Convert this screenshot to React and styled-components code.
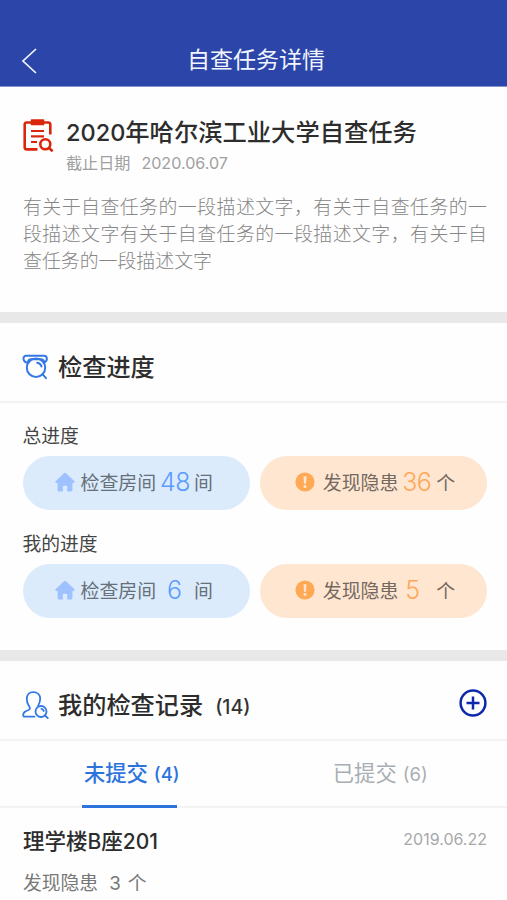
import React, { useState } from "react";
import styled, { createGlobalStyle } from "styled-components";

const GlobalStyle = createGlobalStyle`
  * {
    box-sizing: border-box;
  }
  body {
    margin: 0;
    background: #fefefe;
    font-family: "Liberation Sans", "Noto Sans CJK SC", sans-serif;
    overflow: hidden;
  }
  svg {
    display: block;
  }
`;

const Page = styled.div`
  width: 507px;
  height: 900px;
  overflow: hidden;
  display: flex;
  flex-direction: column;
`;

const Header = styled.header`
  height: 87px;
  flex-shrink: 0;
  padding: 33px 21px 0;
  display: grid;
  grid-template-columns: 40px 1fr 40px;
  background: #2b46a8;
  border-bottom: 1px solid #8292cd;
`;

const BackButton = styled.div`
  display: flex;
  align-items: center;
  height: 55px;
`;

const HeaderTitle = styled.div`
  color: #f2f5ff;
  font-size: 23px;
  line-height: 54px;
  text-align: center;
  padding-left: 5px;
  white-space: nowrap;
`;

const Section = styled.section`
  height: ${(props) => props.$height}px;
  flex-shrink: 0;
  border-bottom: ${(props) => (props.$last ? "none" : "11px solid #e8e8e8")};
`;

const TaskBox = styled.div`
  padding: 31px 20px 0 23px;
`;

const TaskTop = styled.div`
  display: flex;
  gap: 13px;
`;

const TaskIcon = styled.div`
  width: 30px;
  height: 34px;
  margin-top: 1px;
`;

const TaskName = styled.div`
  color: #2d2d2d;
  font-size: 24.3px;
  font-weight: 500;
  line-height: 29px;
  white-space: nowrap;
`;

const Num = styled.span`
  font-family: "Inter", sans-serif;
  font-size: ${(props) => props.$size || "inherit"};
`;

const Deadline = styled.div`
  display: flex;
  gap: 11px;
  margin-top: 5px;
  color: #a0a0a0;
  font-size: 16.1px;
  line-height: 22px;
`;

const Description = styled.p`
  margin: 20px 0 0;
  color: #868686;
  font-size: 18.9px;
  font-weight: 300;
  line-height: 27px;
  text-align: justify;
`;

const SectionTitle = styled.div`
  height: ${(props) => props.$height}px;
  padding: 0 20px 0 22px;
  display: flex;
  align-items: center;
  border-bottom: 2px solid #f3f3f3;
`;

const TitleIcon = styled.div`
  width: 27px;
  height: 28px;
  margin-right: 9px;
  margin-top: ${(props) => props.$top}px;
`;

const TitleText = styled.div`
  color: #2d2d2d;
  font-size: 24.2px;
  font-weight: 500;
  line-height: 36px;
  padding-top: 12px;
  white-space: nowrap;
`;

const Count = styled.div`
  margin-left: 12px;
  padding-top: 13px;
  color: #333;
  font-family: "Inter", sans-serif;
  font-size: 19.6px;
  font-weight: 500;
`;

const AddButton = styled.div`
  width: 28px;
  height: 28px;
  margin-left: auto;
  margin-top: 6px;
`;

const Progress = styled.div`
  padding: 16px 20px 0 22.5px;
`;

const ProgressLabel = styled.div`
  height: 37px;
  color: #444;
  font-size: 18.8px;
  line-height: 36px;
`;

const PillRow = styled.div`
  display: grid;
  grid-template-columns: 1fr 1fr;
  gap: 10px;
  margin-bottom: 17px;
`;

const Pill = styled.div`
  height: 54px;
  border-radius: 27px;
  padding-left: ${(props) => (props.$warn ? 35 : 32)}px;
  display: flex;
  align-items: center;
  background: ${(props) => (props.$warn ? "#fee6d1" : "#dbebfc")};
  color: ${(props) => (props.$warn ? "#75695f" : "#667079")};
  font-size: 18.9px;
  line-height: 54px;
`;

const PillIcon = styled.div`
  width: 20px;
  height: 20px;
  margin-top: -2px;
  margin-right: ${(props) => (props.$warn ? 8 : 6)}px;
`;

const PillText = styled.span`
  padding-top: 2px;
`;

const PillValue = styled.span`
  width: 38px;
  padding-left: ${(props) => props.$left}px;
  padding-bottom: 2px;
  color: ${(props) => (props.$warn ? "#ffa758" : "#5b9bff")};
  font-family: "Inter", sans-serif;
  font-size: 25px;
  font-weight: 300;
  letter-spacing: -0.6px;
`;

const Tabs = styled.div`
  height: 67px;
  display: grid;
  grid-template-columns: 1fr 1fr;
  grid-template-rows: 65px;
  border-bottom: 2px solid #f3f3f3;
`;

const Tab = styled.div`
  position: relative;
  display: flex;
  justify-content: center;
  gap: 6px;
  padding-left: ${(props) => props.$shift}px;
  color: ${(props) => (props.$active ? "#2c73dc" : "#a8aeb3")};
  font-size: 21.3px;
  font-weight: ${(props) => (props.$active ? 500 : 400)};
  line-height: 67px;
  cursor: pointer;
`;

const TabLine = styled.div`
  position: absolute;
  left: 82px;
  bottom: -2px;
  width: 95px;
  height: 3px;
  background: #2c73dc;
`;

const Record = styled.div`
  padding: 18px 20px 0 23px;
`;

const RecordTop = styled.div`
  display: flex;
  justify-content: space-between;
  line-height: 32px;
`;

const RecordName = styled.div`
  color: #2d2d2d;
  font-size: 21.5px;
  font-weight: 500;
`;

const RecordDate = styled.div`
  color: #a8a8a8;
  font-family: "Inter", sans-serif;
  font-size: 16px;
  line-height: 27px;
`;

const RecordInfo = styled.div`
  display: flex;
  margin-top: 11px;
  color: #777;
  font-size: 18.8px;
  line-height: 30px;
`;

const DangerCount = styled(Num)`
  margin: 0 7px 0 11px;
`;

const TaskSvg = () => (
  <svg width="31" height="34" viewBox="0 0 31 34" fill="none" stroke="#d9270c" strokeWidth="2.6">
    <path d="M27.3 15.5V5.6Q27.3 3.5 25.2 3.5H3.8Q1.7 3.5 1.7 5.6V28.3Q1.7 30.4 3.8 30.4H14.5" />
    <path d="M8.5 1H20.5V5.5H8.5Z" fill="#d9270c" strokeWidth="1.5" strokeLinejoin="round" />
    <path d="M8 12H21M8 17.3H21M8 23H14" strokeWidth="2.2" />
    <circle cx="22.3" cy="25.2" r="5" />
    <path d="M26 29L29.7 32.3" />
  </svg>
);

const ProgressSvg = () => (
  <svg width="27" height="28" viewBox="0 0 27 28" fill="none" stroke="#3478e5" strokeWidth="2" strokeLinecap="round">
    <circle cx="14" cy="14.7" r="9.2" />
    <path d="M6 9.3C3 10 1.2 7.2 1.5 5Q2 2.8 4.3 2.8H22.1Q24.8 2.9 24.8 5.6C25 7.5 23.8 8.7 22.3 9.3" />
    <path d="M6.2 8.8Q6.2 6.5 9 6.2H19Q21.5 6.4 22.2 8.8M15.2 9.8Q18.7 10.4 19.5 13.6M20.7 21.4L24 25.2" />
  </svg>
);

const PersonSvg = () => (
  <svg width="27" height="28" viewBox="0 0 27 28" fill="none" stroke="#3478e5" strokeWidth="1.8" strokeLinecap="round" strokeLinejoin="round">
    <path d="M12.5 25.7H2.8Q1 25.7 1.2 23.7C1.4 20.8 3.2 20.3 6.6 19C8.8 18 8 16.5 6.7 14.6C5.5 12.8 4.8 10.7 4.8 8C4.8 3.7 7.4 1.2 11.3 1.2C15.4 1.2 18.2 3.7 18.2 8C18.2 10.7 17.3 12.5 16.1 14.8" />
    <circle cx="19" cy="20.5" r="5.5" />
    <path d="M23 24.5L25.8 27.2M19.5 17.8Q21.4 18.2 21.7 20" />
  </svg>
);

const HomeSvg = () => (
  <svg width="20" height="20" viewBox="0 0 20 20" fill="#9fc1ff">
    <path d="M9 1.2Q10 .3 11 1.2L19.2 8.9Q20.3 10.5 18.5 11H17.4V18Q17.4 19.5 15.8 19.5H12.2V14.5Q12.2 13.8 11.4 13.8H8.6Q7.8 13.8 7.8 14.5V19.5H4.2Q2.6 19.5 2.6 18V11H1.5Q-.3 10.5.8 8.9Z" />
  </svg>
);

const WarnSvg = () => (
  <svg width="20" height="20" viewBox="0 0 20 20">
    <circle cx="10" cy="10" r="9.6" fill="#ffa955" />
    <path d="M8.5 4.2H11.5L11 11.8H9Z" fill="#fee6d1" />
    <circle cx="10" cy="14.6" r="1.5" fill="#fee6d1" />
  </svg>
);

const progressList = [
  { label: "总进度", rooms: 48, dangers: 36, roomLeft: 4, dangerLeft: 4 },
  { label: "我的进度", rooms: 6, dangers: 5, roomLeft: 11, dangerLeft: 7 },
];

export default function App() {
  const [activeTab, setActiveTab] = useState(0);

  return (
    <>
      <GlobalStyle />
      <Page lang="zh-CN">
        <Header>
          <BackButton>
            <svg width="18" height="26" viewBox="0 0 18 26" fill="none" stroke="#f2f5ff" strokeWidth="1.7">
              <path d="M15 1L2 13L15 25" />
            </svg>
          </BackButton>
          <HeaderTitle>自查任务详情</HeaderTitle>
        </Header>

        <Section $height={236}>
          <TaskBox>
            <TaskTop>
              <TaskIcon>
                <TaskSvg />
              </TaskIcon>
              <div>
                <TaskName>
                  <Num $size="23.5px">2020</Num>年哈尔滨工业大学自查任务
                </TaskName>
                <Deadline>
                  <span>截止日期</span>
                  <Num>2020.06.07</Num>
                </Deadline>
              </div>
            </TaskTop>
            <Description>
              有关于自查任务的一段描述文字，有关于自查任务的一段描述文字有关于自查任务的一段描述文字，有关于自查任务的一段描述文字
            </Description>
          </TaskBox>
        </Section>

        <Section $height={338}>
          <SectionTitle $height={80}>
            <TitleIcon $top={9}>
              <ProgressSvg />
            </TitleIcon>
            <TitleText>检查进度</TitleText>
          </SectionTitle>
          <Progress>
            {progressList.map((item) => (
              <div key={item.label}>
                <ProgressLabel>{item.label}</ProgressLabel>
                <PillRow>
                  <Pill>
                    <PillIcon>
                      <HomeSvg />
                    </PillIcon>
                    <PillText>检查房间</PillText>
                    <PillValue $left={item.roomLeft}>{item.rooms}</PillValue>
                    <PillText>间</PillText>
                  </Pill>
                  <Pill $warn>
                    <PillIcon $warn>
                      <WarnSvg />
                    </PillIcon>
                    <PillText>发现隐患</PillText>
                    <PillValue $warn $left={item.dangerLeft}>{item.dangers}</PillValue>
                    <PillText>个</PillText>
                  </Pill>
                </PillRow>
              </div>
            ))}
          </Progress>
        </Section>

        <Section $height={239} $last>
          <SectionTitle $height={80}>
            <TitleIcon $top={10}>
              <PersonSvg />
            </TitleIcon>
            <TitleText>我的检查记录</TitleText>
            <Count>(14)</Count>
            <AddButton>
              <svg width="28" height="28" viewBox="0 0 28 28" fill="none" stroke="#0c28ac" strokeWidth="2.5">
                <circle cx="14" cy="14" r="12.4" />
                <path d="M7.5 14H20.5M14 7.5V20.5" />
              </svg>
            </AddButton>
          </SectionTitle>
          <Tabs>
            <Tab $active={activeTab === 0} $shift={10} onClick={() => setActiveTab(0)}>
              未提交 <Num $size="18.5px">(4)</Num>
              {activeTab === 0 && <TabLine />}
            </Tab>
            <Tab $active={activeTab === 1} $shift={0} onClick={() => setActiveTab(1)}>
              已提交 <Num $size="18.5px">(6)</Num>
              {activeTab === 1 && <TabLine />}
            </Tab>
          </Tabs>
          <Record>
            <RecordTop>
              <RecordName>
                理学楼<Num $size="21px">B</Num>座<Num $size="21px">201</Num>
              </RecordName>
              <RecordDate>2019.06.22</RecordDate>
            </RecordTop>
            <RecordInfo>
              发现隐患
              <DangerCount>3</DangerCount>
              个
            </RecordInfo>
          </Record>
        </Section>
      </Page>
    </>
  );
}
